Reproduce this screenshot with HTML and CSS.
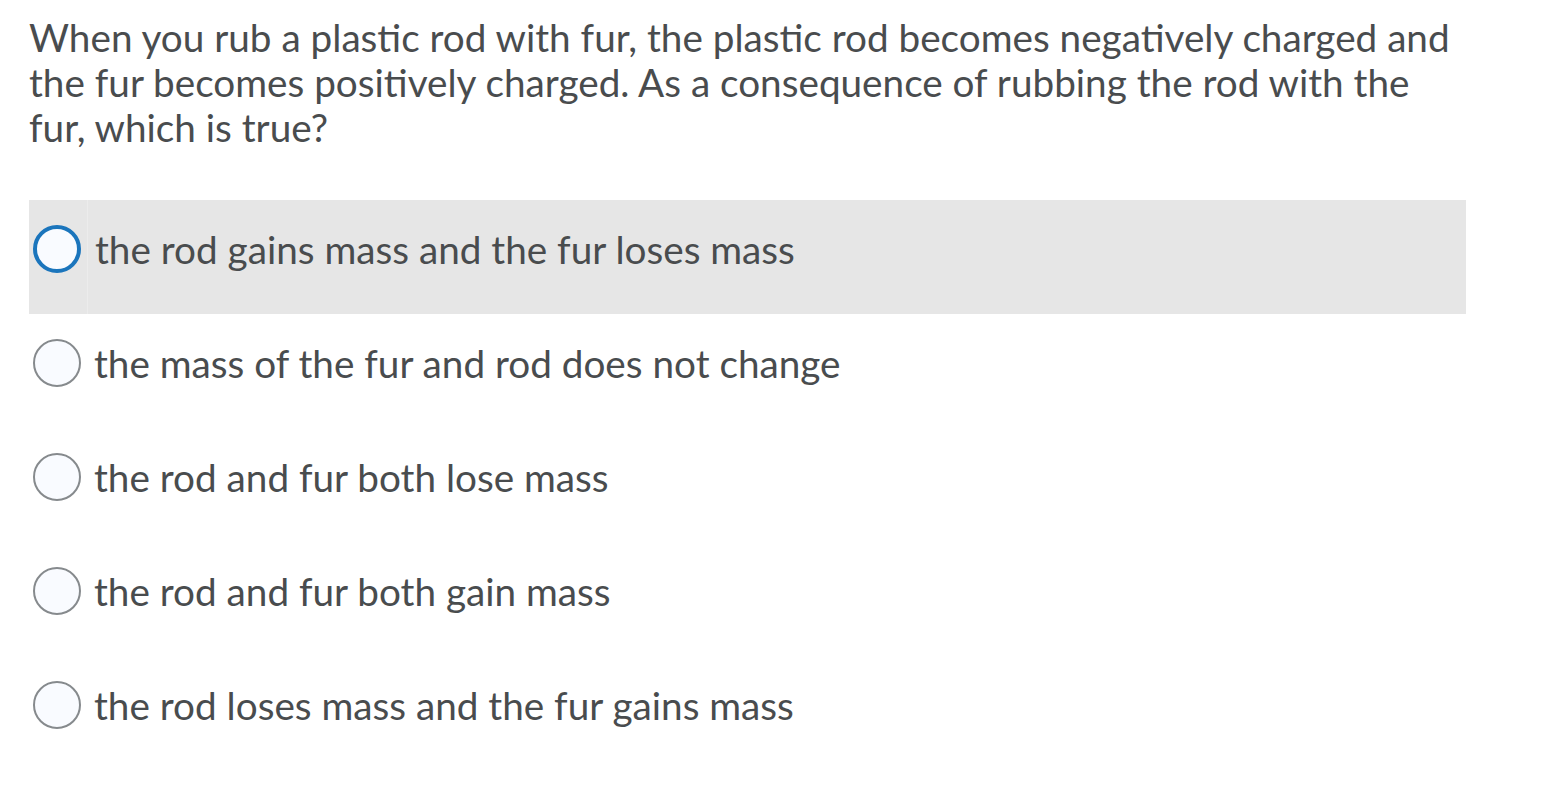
FILE: index.html
```html
<!DOCTYPE html>
<html lang="en">
<head>
<meta charset="utf-8">
<title>Question</title>
<link rel="stylesheet" href="styles.css">
</head>
<body>
<div class="quiz">
  <p class="question">When you rub a plastic rod with fur, the plastic rod becomes negatively charged and the fur becomes positively charged. As a consequence of rubbing the rod with the fur, which is true?</p>
  <div class="options">
    <label class="option focused">
      <span class="cell-radio"><span class="radio"></span></span>
      <span class="cell-text">the rod gains mass and the fur loses mass</span>
    </label>
    <label class="option">
      <span class="cell-radio"><span class="radio"></span></span>
      <span class="cell-text">the mass of the fur and rod does not change</span>
    </label>
    <label class="option">
      <span class="cell-radio"><span class="radio"></span></span>
      <span class="cell-text">the rod and fur both lose mass</span>
    </label>
    <label class="option">
      <span class="cell-radio"><span class="radio"></span></span>
      <span class="cell-text">the rod and fur both gain mass</span>
    </label>
    <label class="option">
      <span class="cell-radio"><span class="radio"></span></span>
      <span class="cell-text">the rod loses mass and the fur gains mass</span>
    </label>
  </div>
</div>
</body>
</html>
```
FILE: styles.css
```css
html, body {
  margin: 0;
  padding: 0;
  background: #ffffff;
}
body {
  font-family: Lato, "Open Sans", sans-serif;
  color: #494c4e;
}
.quiz {
  padding: 15px 0 0 29px;
  width: 1437px;
}
.question {
  margin: 0;
  font-size: 38.7px;
  line-height: 45px;
  height: 185px;
}
.options {
  display: flex;
  flex-direction: column;
}
.option {
  display: grid;
  grid-template-columns: 58px 1fr;
  height: 114px;
  box-sizing: border-box;
  font-size: 38.7px;
}
.option.focused {
  background: #e6e6e6;
}
.cell-radio {
  padding: 25px 0 0 4px;
}
.focused .cell-text {
  border-left: 1px solid #ececec;
}
.cell-text {
  padding: 25px 0 0 7px;
  line-height: 48px;
}
.radio {
  display: block;
  width: 48px;
  height: 48px;
  box-sizing: border-box;
  border-radius: 50%;
  background: #f9fbff;
  border: 2px solid #868a8d;
}
.focused .radio {
  border: 4px solid #1b75bc;
}
```
